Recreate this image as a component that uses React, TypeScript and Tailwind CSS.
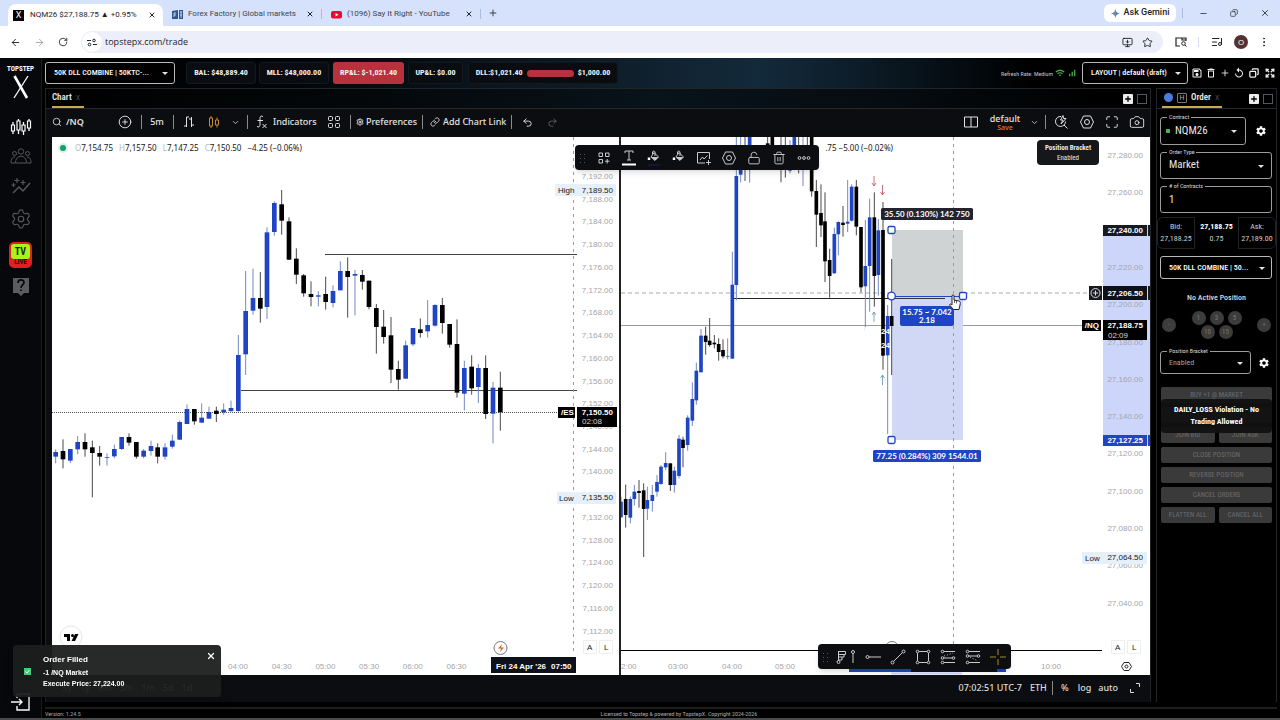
import type { ReactNode } from "react";
import {
  ArrowLeft,
  ArrowRight,
  Camera,
  ChevronDown,
  CirclePlus,
  Copy,
  EllipsisVertical,
  Expand,
  Link,
  ListMusic,
  LockOpen,
  Maximize,
  Minus,
  MonitorDown,
  Plus,
  Redo2,
  RotateCw,
  Search,
  Settings,
  Star,
  Trash2,
  Undo2,
  X,
} from "lucide-react";
import { MdSettings, MdOutlineSave, MdOutlineDelete, MdReplay, MdWifi, MdSignalCellularAlt } from "react-icons/md";

type Candle = [x: number, top: number, bottom: number, high: number, low: number, up: number];

const BLUE = "#1f45c4";

// x, body top, body bottom, wick top, wick bottom, up (third-of-a-pixel units)
const esCandles: Candle[] = [
  [167, 846, 860, 838, 880, 1], [189, 843, 868, 808, 895, 0], [211, 837, 872, 837, 879, 1],
  [233, 816, 838, 798, 853, 1], [255, 816, 838, 790, 860, 0], [277, 832, 849, 812, 982, 0],
  [299, 849, 860, 828, 887, 0], [321, 861, 863, 850, 887, 1], [343, 837, 859, 824, 865, 1],
  [365, 801, 837, 801, 840, 1], [387, 801, 818, 790, 827, 0], [409, 816, 860, 816, 866, 0],
  [431, 842, 860, 837, 865, 1], [453, 828, 843, 812, 857, 1], [473, 832, 860, 820, 880, 0],
  [495, 832, 860, 820, 869, 1], [517, 812, 830, 794, 836, 1], [539, 756, 809, 752, 810, 1],
  [561, 717, 762, 703, 762, 1], [583, 717, 754, 717, 764, 0], [605, 743, 758, 700, 758, 1],
  [627, 726, 746, 710, 746, 1], [649, 722, 732, 710, 756, 0], [671, 719, 727, 700, 734, 1],
  [693, 714, 723, 692, 726, 1], [715, 555, 723, 495, 725, 1], [737, 423, 553, 303, 615, 1],
  [759, 384, 422, 296, 434, 1], [781, 384, 416, 306, 458, 0], [801, 187, 411, 172, 447, 1],
  [823, 99, 186, 94, 197, 1], [845, 103, 152, 60, 194, 0], [867, 154, 269, 142, 270, 0],
  [889, 266, 314, 235, 342, 0], [911, 316, 370, 312, 380, 0], [933, 372, 381, 334, 409, 0],
  [955, 376, 380, 364, 409, 1], [977, 372, 396, 320, 419, 0], [999, 363, 399, 346, 412, 1],
  [1021, 303, 361, 274, 361, 1], [1043, 303, 321, 262, 443, 0], [1065, 312, 317, 300, 436, 1],
  [1087, 315, 335, 300, 359, 0], [1107, 332, 411, 332, 418, 0], [1129, 414, 471, 402, 551, 0],
  [1151, 470, 501, 420, 521, 0], [1173, 496, 599, 441, 639, 0], [1195, 597, 629, 572, 659, 0],
  [1217, 526, 626, 512, 627, 1], [1239, 474, 523, 474, 529, 1], [1261, 478, 489, 445, 503, 0],
  [1283, 465, 484, 390, 503, 1], [1305, 405, 467, 403, 470, 1], [1327, 405, 459, 384, 491, 0],
  [1349, 462, 524, 462, 533, 0], [1371, 522, 668, 448, 683, 0], [1393, 594, 671, 572, 721, 1],
  [1415, 590, 655, 556, 674, 0], [1435, 594, 651, 582, 699, 1], [1457, 594, 732, 556, 747, 0],
  [1479, 653, 731, 636, 820, 1], [1501, 653, 727, 605, 782, 0],
];

const nqCandles: Candle[] = [
  [33, 1115, 1162, 1100, 1162, 1], [47, 1107, 1155, 1064, 1193, 0], [61, 1107, 1163, 1100, 1180, 1],
  [73, 1085, 1107, 1065, 1127, 1], [87, 1083, 1089, 1050, 1133, 0], [101, 1081, 1137, 1060, 1281, 0],
  [112, 1110, 1136, 1070, 1170, 1], [127, 1095, 1113, 1065, 1145, 1], [141, 1056, 1085, 1035, 1100, 1],
  [153, 1010, 1062, 1005, 1064, 1], [167, 999, 1012, 967, 1020, 1], [181, 1000, 1065, 1000, 1083, 0],
  [193, 1022, 1065, 1010, 1088, 1], [207, 926, 1038, 915, 1045, 1], [219, 929, 954, 920, 1012, 0],
  [233, 863, 945, 856, 962, 1], [247, 807, 872, 757, 888, 1], [259, 722, 811, 698, 824, 1],
  [273, 617, 727, 597, 727, 1], [287, 617, 636, 590, 674, 0], [299, 632, 645, 564, 650, 0],
  [313, 638, 643, 615, 655, 0], [326, 642, 666, 625, 692, 0], [339, 660, 679, 628, 685, 0],
  [353, 678, 680, 625, 688, 1], [367, 464, 686, 365, 686, 1], [379, 138, 465, 0, 511, 1],
  [392, 60, 134, 0, 157, 1], [405, 50, 60, 0, 153, 0], [419, 0, 60, 0, 158, 1],
  [473, 40, 50, 0, 60, 0], [487, 0, 60, 0, 60, 0], [513, 50, 60, 0, 157, 0],
  [526, 50, 60, 0, 143, 0], [540, 60, 122, 30, 130, 1], [553, 0, 60, 0, 60, 1],
  [566, 50, 60, 0, 130, 0], [579, 50, 60, 0, 168, 1], [592, 50, 60, 0, 60, 0],
  [605, 0, 184, 0, 200, 0], [619, 183, 254, 150, 351, 0], [633, 249, 286, 163, 321, 0],
  [645, 274, 394, 187, 456, 0], [659, 390, 438, 356, 503, 0], [673, 312, 430, 293, 431, 1],
  [685, 276, 313, 274, 376, 1], [699, 278, 285, 228, 320, 0], [713, 275, 281, 150, 306, 1],
  [725, 170, 272, 163, 275, 1], [739, 170, 290, 150, 316, 0], [753, 291, 472, 291, 487, 0],
  [766, 408, 469, 270, 600, 1], [779, 262, 408, 206, 545, 1], [793, 262, 438, 187, 530, 0],
  [805, 301, 435, 267, 497, 1], [819, 300, 677, 216, 719, 0], [833, 558, 676, 525, 912, 1],
  [845, 558, 588, 387, 735, 0],
];

function Candles({ data, width, transform }: { data: Candle[]; width: number; transform: string }) {
  return (
    <g transform={transform}>
      {data.map(([x, top, bottom, high, low, up]) => (
        <g key={x}>
          <rect x={x - 1.5} y={high} width={3} height={low - high} fill={up ? "#7389c4" : "#4a4a4a"} />
          <rect x={x - width / 2} y={top} width={width} height={bottom - top} fill={up ? BLUE : "#000"} />
        </g>
      ))}
    </g>
  );
}

const axisFont = "font-['Liberation_Sans',Arial,sans-serif] text-[8px]";

function EsChart() {
  const ticks = Array.from({ length: 21 }, (_, i) => 7192 - i * 4);
  const times = ["04:00", "04:30", "05:00", "05:30", "06:00", "06:30"];
  return (
    <svg viewBox="0 0 567 538" className={`block w-full bg-white ${axisFont}`}>
      {ticks.map((t, i) => (
        <text key={t} x="561" y={42 + i * 22.73} textAnchor="end" fill="#a3a5aa">
          {`${t.toLocaleString("en-US")}.00`}
        </text>
      ))}
      {times.map((t, i) => (
        <text key={t} x={186 + i * 43.7} y="532" textAnchor="middle" fill="#a3a5aa">{t}</text>
      ))}
      <path d="M273 117.500h252M189 253.500h336" stroke="#444" />
      <path d="M0 275.500h506" stroke="#555" strokeDasharray="1 1" />
      <Candles data={esCandles} width={14} transform="translate(-52 33) scale(0.33333)" />
      <path d="M521.500 0v518" stroke="#9a9aa2" strokeDasharray="3 4" />
      <rect x="503" y="47" width="61" height="12" fill="#e6f0fb" />
      <text x="506" y="56" fill="#131722">High</text>
      <text x="561" y="56" textAnchor="end" fill="#131722">7,189.50</text>
      <rect x="505" y="355" width="59" height="12" fill="#e6f0fb" />
      <text x="507" y="364" fill="#131722">Low</text>
      <text x="561" y="363" textAnchor="end" fill="#131722">7,135.50</text>
      <rect x="506" y="270" width="17" height="11" fill="#000" />
      <rect x="525" y="270" width="40" height="20" fill="#000" />
      <g fill="#fff" className="font-bold">
        <text x="509" y="278">/ES</text>
        <text x="561" y="278" textAnchor="end">7,150.50</text>
      </g>
      <text x="530" y="287" fill="#d5d5d5">02:08</text>
      <circle cx="448.500" cy="511" r="6.500" fill="#fff" stroke="#777" />
      <path d="M450 507l-4 4.500h3l-1 3.500 4-4.500h-3z" fill="#e2622c" />
      <rect x="439" y="520" width="85" height="16" fill="#0f111a" />
      <text x="444" y="532" fill="#fff" className="font-bold">Fri 24 Apr '26</text>
      <text x="499" y="532" fill="#fff" className="font-bold">07:50</text>
      <path d="M531.500 503.500h13v13h-13zM547.500 503.500h13v13h-13z" fill="none" stroke="#eee" />
      <text x="535" y="513" fill="#222">A</text>
      <text x="552" y="513" fill="#222">L</text>
      <circle cx="19" cy="500" r="11" fill="#fff" stroke="#e6e6e6" />
      <path d="M12 497h6v7h-3v-4h-3zM23 497h3.500l-3.500 7h-3.500zM19 498.500a1.500 1.500 0 1 0 3 0a1.500 1.500 0 1 0-3 0" fill="#000" />
    </svg>
  );
}

function NqChart() {
  const ticks = Array.from({ length: 13 }, (_, i) => 27280 - i * 20).filter((t) => t !== 27240);
  return (
    <svg viewBox="0 0 529 538" className={`block w-full bg-white ${axisFont}`}>
      <rect x="482" y="88" width="47" height="220" fill="#ccd6fb" />
      {ticks.map((t) => (
        <text key={t} x="522" y={21 + (27280 - t) * 1.865} textAnchor="end" fill="#a3a5aa">
          {`${t.toLocaleString("en-US")}.00`}
        </text>
      ))}
      <text x="0" y="532" fill="#a3a5aa">2:00</text>
      {[["03:00", 57], ["04:00", 111], ["05:00", 164], ["10:00", 430]].map(([t, x]) => (
        <text key={t} x={x} y="532" textAnchor="middle" fill="#a3a5aa">{t}</text>
      ))}
      <path d="M0 156h467" stroke="#a9a9ae" strokeDasharray="4 3" />
      <path d="M0 188.500h461" stroke="#9a9a9a" />
      <path d="M113 161.500h211" stroke="#222" />
      <rect x="271" y="93" width="71" height="67" fill="#d0d3d3" />
      <rect x="271" y="160" width="71" height="143" fill="#d0d8f5" />
      <Candles data={nqCandles} width={11} transform="translate(-11 -7) scale(0.33333)" />
      <g className="font-bold" fill="#fff">
        <text x="260" y="197">24</text>
        <text x="260" y="211">24</text>
      </g>
      <path d="M244.500 190v20" stroke="#fff" strokeDasharray="3 4" />
      <g strokeWidth=".8" fill="none">
        <path d="M253 39v10m-2-3l2 3 2-3M261.500 48v10m-2-3l2 3 2-3" stroke="#c8485a" />
        <path d="M253 185v-10m-2 3l2-3 2 3M261.500 248v-10m-2 3l2-3 2 3" stroke="#5f93ac" />
      </g>
      <path d="M332.500 0v513" stroke="#9a9aa2" strokeDasharray="3 4" />
      <path d="M271 159.500h71" stroke={BLUE} />
      <path d="M271 161.500h53" stroke="#333" />
      <g fill="#fff" stroke={BLUE} strokeWidth="1.300">
        <rect x="267" y="89.500" width="7" height="7" rx="1.500" />
        <rect x="267" y="299.500" width="7" height="7" rx="1.500" />
        <rect x="338.500" y="155.500" width="7" height="7" rx="1.500" />
        <circle cx="270.500" cy="159" r="3.800" />
      </g>
      <rect x="260" y="71" width="92" height="12" rx="1.500" fill="#24242f" />
      <rect x="252" y="313" width="108" height="12" rx="1.500" fill={BLUE} />
      <rect x="279" y="169" width="54" height="20" rx="2" fill={BLUE} />
      <g className="font-['Lato',sans-serif] font-bold" fill="#fff" textAnchor="middle">
        <text x="306" y="80">35.50 (0.130%) 142 750</text>
        <text x="306" y="322">77.25 (0.284%) 309 1544.01</text>
        <text x="306" y="178">15.75 ~ 7.042</text>
        <text x="306" y="186">2.18</text>
      </g>
      {/* pointer hand */}
      <path d="M331 159c0-1.500 2-1.500 2 0v4l5 1c1.500.5 1.500 2 1 4l-1 4.500h-5.500l-3.500-4c-1-1.500.5-2 2-.5z" fill="#fff" stroke="#222" />
      <path d="M333.500 163v3M335.500 163.500v3" stroke="#222" strokeWidth=".7" />
      <rect x="482" y="88" width="44" height="11" fill="#171923" />
      <rect x="482" y="149" width="44" height="14" fill="#0f111a" />
      <rect x="468" y="149" width="13" height="14" fill="#171923" />
      <circle cx="474.500" cy="156" r="4.500" fill="none" stroke="#ddd" />
      <path d="M472 156h5m-2.500-2.500v5" stroke="#ddd" />
      <rect x="461" y="183" width="19" height="11" fill="#000" />
      <rect x="482" y="183" width="44" height="20" fill="#000" />
      <rect x="482" y="298" width="44" height="11" fill={BLUE} />
      <path d="M528 88v11M528 149v14" stroke="#171923" strokeWidth="2" />
      <path d="M528 298v11" stroke={BLUE} strokeWidth="2" />
      <g fill="#fff" className="font-bold" textAnchor="end">
        <text x="522" y="96">27,240.00</text>
        <text x="522" y="159">27,206.50</text>
        <text x="522" y="191">27,188.75</text>
        <text x="522" y="306">27,127.25</text>
        <text x="478" y="191">/NQ</text>
      </g>
      <text x="487" y="201" fill="#d5d5d5">02:09</text>
      <rect x="461" y="415" width="65" height="12" fill="#e6f0fb" />
      <text x="464" y="424" fill="#131722">Low</text>
      <text x="522" y="423" textAnchor="end" fill="#131722">27,064.50</text>
      <path d="M0 513.500h481" stroke="#000" />
      <circle cx="271" cy="511" r="6.500" fill="#fff" stroke="#777" />
      <path d="M228 531.500h62" stroke={BLUE} strokeWidth="7" />
      <path d="M290 531.500h86" stroke="#0f111a" strokeWidth="7" />
      <path d="M376 531.500h9" stroke={BLUE} strokeWidth="7" />
      <path d="M270 536.500h71" stroke="#ccd6fb" strokeWidth="2" />
      <path d="M490.500 503.500h13v13h-13zM506.500 503.500h13v13h-13z" fill="none" stroke="#eee" />
      <text x="494" y="513" fill="#222">A</text>
      <text x="511" y="513" fill="#222">L</text>
      <path d="M500.500 529.500l2.500-4h5l2.500 4-2.500 4h-5z" fill="none" stroke="#222" />
      <circle cx="505.500" cy="529.500" r="1.500" fill="none" stroke="#222" />
    </svg>
  );
}

function Svg({ children, w = 16, h = 16, className = "" }: { children: ReactNode; w?: number; h?: number; className?: string }) {
  return (
    <svg width={w} height={h} viewBox={`0 0 ${w} ${h}`} fill="none" stroke="currentColor" className={`shrink-0 ${className}`}>
      {children}
    </svg>
  );
}

function Hexagon() {
  return (
    <Svg>
      <path d="M1.500 8L4.500 2h7l3 6-3 6h-7z" />
      <circle cx="8" cy="8" r="2.500" />
    </Svg>
  );
}

function Grip() {
  return (
    <Svg w={8} h={12}>
      <path d="M1.500 2v1M5.500 2v1M1.500 6v1M5.500 6v1M1.500 10v1M5.500 10v1" stroke="#555" />
    </Svg>
  );
}

function IconButton({ label, className = "", children }: { label: string; className?: string; children: ReactNode }) {
  return (
    <button type="button" aria-label={label} className={`flex shrink-0 items-center justify-center ${className}`}>
      {children}
    </button>
  );
}

function Sep({ className = "w-3" }: { className?: string }) {
  return (
    <span className={`flex shrink-0 justify-center ${className}`}>
      <span className="h-[14px] w-px bg-[#8b8b8d]" />
    </span>
  );
}

const browserTabs = [
  { title: "Forex Factory | Global markets", icon: "ff" },
  { title: "(1096) Say It Right - YouTube", icon: "yt" },
];

function BrowserChrome() {
  return (
    <header className="bg-[#d6e2fb] font-['Open_Sans',sans-serif] text-[#1f2328]">
      <div className="flex h-[26px] items-center pl-2 font-['Roboto',sans-serif]">
        <div className="mt-1 flex h-[22px] w-[155px] shrink-0 items-center rounded-t-lg bg-white pr-[7px] pl-[5px]">
          <span className="flex h-[11px] w-[11px] shrink-0 items-center justify-center bg-black text-[9px] leading-none text-white">X</span>
          <span className="ml-[6px] flex-1 text-[8px] whitespace-nowrap">NQM26 $27,188.75 ▲ +0.95%</span>
          <button type="button" aria-label="Close tab"><X size={8} strokeWidth={3} /></button>
        </div>
        {browserTabs.map((tab) => (
          <div key={tab.icon} className="flex h-[26px] w-[159px] shrink-0 items-center pt-[2px] pl-[9px] text-[8px] text-[#40454c]">
            {tab.icon === "ff" ? (
              <Svg w={11} h={9}>
                <path d="M0 1l6-1v9H0zM7 0h4v9H7z" fill="#2f568f" stroke="none" />
                <path d="M2 7V3h2M2 5h2M8 2h2M8 5h2M9 1v7" stroke="#dfe8f8" strokeWidth=".8" />
              </Svg>
            ) : (
              <Svg w={11} h={9}>
                <rect y="1" width="11" height="7.500" rx="2" fill="#f00633" stroke="none" />
                <path d="M4.500 3v3.500L7.500 4.800z" fill="#fff" stroke="none" />
              </Svg>
            )}
            <span className="ml-[5px] flex-1 overflow-hidden whitespace-nowrap">{tab.title}</span>
            <button type="button" aria-label="Close tab" className="mr-[7px] ml-1 text-[#1f2328]"><X size={8} strokeWidth={3} /></button>
            <span className="h-[10px] w-px bg-[#a9bce0]" />
          </div>
        ))}
        <button type="button" aria-label="New tab" className="ml-[7px]"><Plus size={10} /></button>
        <div className="ml-auto flex items-center">
          <button type="button" className="flex h-[18px] w-[72px] items-center justify-center gap-1 rounded-md bg-white text-[9px] font-medium whitespace-nowrap">
            <Svg w={9} h={9}>
              <path d="M4.500 0C5 3 6 4 9 4.500 6 5 5 6 4.500 9 4 6 3 5 0 4.500 3 4 4 3 4.500 0z" fill="#3f7de8" stroke="none" />
              <path d="M0 4.500C3 4 4 3 4.500 0v4.500z" fill="#e2705a" stroke="none" />
              <path d="M0 4.500C3 5 4 6 4.500 9V4.500z" fill="#4caf6a" stroke="none" />
            </Svg>
            Ask Gemini
          </button>
          <span className="ml-[6px] h-[10px] w-px bg-[#a9bce0]" />
          <IconButton label="Minimize" className="w-10"><Minus size={9} /></IconButton>
          <IconButton label="Restore" className="w-[22px]"><Copy size={8} className="-scale-x-100" /></IconButton>
          <IconButton label="Close" className="mr-[10px] ml-[14px] w-[11px]"><X size={10} /></IconButton>
        </div>
      </div>
      <div className="flex h-8 items-center bg-white pr-[10px] pl-[9px]">
        <IconButton label="Back" className="w-3"><ArrowLeft size={11} /></IconButton>
        <IconButton label="Forward" className="ml-3 w-3 text-[#9aa0a6]"><ArrowRight size={11} /></IconButton>
        <IconButton label="Reload" className="ml-3 w-3"><RotateCw size={10} /></IconButton>
        <div className="ml-[12px] flex h-[22px] flex-1 items-center rounded-full bg-[#eceff9] pr-[8px] pl-[1px]">
          <span className="flex h-5 w-5 items-center justify-center rounded-full bg-white">
            <Svg w={10} h={9}>
              <path d="M0 2.500h4M6 6.500h4" strokeWidth="1.200" />
              <circle cx="7" cy="2.500" r="1.300" />
              <circle cx="2.500" cy="6.500" r="1.300" />
            </Svg>
          </span>
          <input aria-label="Address" defaultValue="topstepx.com/trade" className="ml-[3px] min-w-0 flex-1 bg-transparent text-[9px] outline-none" />
          <IconButton label="Install" className="w-4"><MonitorDown size={11} /></IconButton>
          <IconButton label="Bookmark" className="ml-[4px] w-4"><Star size={11} /></IconButton>
        </div>
        <IconButton label="Lens" className="ml-[11px] w-[14px]">
          <Svg w={12} h={10}>
            <path d="M5 9H1V1h10v3M7 1v2h4" strokeWidth="1.200" />
            <circle cx="8.500" cy="6.500" r="1.800" />
            <path d="M10 8l1.500 1.500" />
          </Svg>
        </IconButton>
        <span className="ml-[10px] h-[10px] w-px bg-[#d3dcf0]" />
        <IconButton label="Media" className="ml-[11px] w-[14px]"><ListMusic size={12} /></IconButton>
        <IconButton label="Profile" className="ml-[10px] h-[14px] w-[14px] rounded-full bg-[#54312f] text-[8px] text-white">O</IconButton>
        <IconButton label="Menu" className="ml-[10px] w-3"><EllipsisVertical size={12} /></IconButton>
      </div>
    </header>
  );
}

function Sidebar() {
  return (
    <nav className="flex w-[42px] shrink-0 flex-col items-center border-r border-[#1b1c1f] bg-[#07080b] text-[#55575b]">
      <div className="mt-[6px] text-[7px] leading-[10px] font-bold text-white">TOPSTEP</div>
      <Svg w={18} h={24} className="mt-[1px] text-white">
        <path d="M2.500 1L15 23" strokeWidth="2.600" />
        <path d="M16 1L2 23" strokeWidth="1.300" />
      </Svg>
      <IconButton label="Trade" className="mt-[17px] h-[22px] w-6 text-white">
        <Svg w={22} h={20}>
          <path d="M3 5v3M3 14v3M8.500 2v2M8.500 13v4M13.500 5v3M13.500 14v4M19 2v2M19 11v3" strokeWidth="1.300" />
          <path d="M1.500 8h3v6h-3zM7 4h3v9H7zM12 8h3v6h-3zM17.500 4h3v7h-3z" strokeWidth="1.200" />
        </Svg>
      </IconButton>
      <IconButton label="Community" className="mt-[9px] h-[18px] w-6">
        <Svg w={22} h={16}>
          <circle cx="11" cy="3.500" r="2.700" />
          <circle cx="4.500" cy="5.500" r="2" />
          <circle cx="17.500" cy="5.500" r="2" />
          <path d="M5.500 15c0-9 11-9 11 0zM5 15H1c0-4 1-6 4-6M17 15h4c0-4-1-6-4-6" />
        </Svg>
      </IconButton>
      <IconButton label="Insights" className="mt-[12px] h-[18px] w-6">
        <Svg w={20} h={16}>
          <path d="M2 15l6-6 4 4 7-8" strokeWidth="1.500" />
          <path d="M6 0v5M3.500 2.500h5M2.500 5v4M.5 7h4M12 2v5M9.500 4.500h5" strokeWidth="1.200" />
        </Svg>
      </IconButton>
      <IconButton label="Settings" className="mt-[13px] h-[22px] w-6"><Settings size={22} strokeWidth={1.3} /></IconButton>
      <button type="button" className="mt-[12px] flex flex-col items-center rounded-[5px] border-[2px] border-[#e02020] bg-[#e02020] leading-none">
        <span className="flex h-[15px] w-[19px] items-center justify-center rounded-[3px] bg-[#a4f51c] text-[10px] font-bold text-[#1c2b10]">TV</span>
        <span className="h-[7px] text-[7px] font-bold text-[#2a0505]">LIVE</span>
      </button>
      <IconButton label="Help" className="mt-[8px] h-5 w-5">
        <Svg w={16} h={19}>
          <path d="M0 1h16v15h-5l-3 3-3-3H0z" fill="#5a5c60" stroke="none" />
          <path d="M5 6c0-4 6-4 6-.5C11 8 8 8 8 11M8 12.500v1.500" stroke="#07080b" strokeWidth="1.700" />
        </Svg>
      </IconButton>
      <IconButton label="Log out" className="mt-auto mb-[6px] h-5 w-5 text-white">
        <Svg w={20} h={20}>
          <path d="M6 6V2h12v16H6v-4M0 10h11M8 7l3 3-3 3" strokeWidth="1.400" />
        </Svg>
      </IconButton>
    </nav>
  );
}

function Caret({ className = "right-[7px]" }: { className?: string }) {
  return (
    <svg width="6" height="3" viewBox="0 0 6 3" className={`pointer-events-none absolute top-1/2 -mt-px ${className}`}>
      <path d="M0 0h6L3 3z" fill="#e4e4e4" />
    </svg>
  );
}

function Dropdown({ label, value, className = "" }: { label: string; value: string; className?: string }) {
  return (
    <div className={`relative shrink-0 ${className}`}>
      <select
        aria-label={label}
        className="block h-full w-full appearance-none truncate rounded-[3px] border border-[#b9b9b9] bg-black pr-[14px] pl-2 text-[8px] font-medium text-white"
      >
        <option>{value}</option>
      </select>
      <Caret />
    </div>
  );
}

function TopBar() {
  const chip = "flex h-[22px] shrink-0 items-center justify-center rounded-[3px] border border-[#14191e] bg-[#090c10]";
  return (
    <div className="flex h-[30px] items-center bg-[linear-gradient(90deg,#000_0%,#02060a_20%,#0d1a24_42%,#132a3b_58%,#0c1c28_66%,#000_80%)] text-[8px] font-bold whitespace-nowrap text-[#f2f2f2]">
      <Dropdown label="Account" value="50K DLL COMBINE | 50KTC-..." className="h-[22px] w-[130px]" />
      <div className={`ml-[11px] w-[70px] ${chip}`}>BAL: $48,889.40</div>
      <div className={`ml-[3px] w-[70px] ${chip}`}>MLL: $48,000.00</div>
      <div className="ml-[4px] flex h-[22px] w-[71px] shrink-0 items-center justify-center rounded-[3px] bg-[#b8323e]">RP&amp;L: $-1,021.40</div>
      <div className={`ml-[4px] w-[55px] ${chip}`}>UP&amp;L: $0.00</div>
      <div className={`ml-[5px] w-[150px] gap-1 ${chip}`}>
        DLL:$1,021.40
        <span className="h-[7px] w-[47px] rounded-full bg-[#b8323e]" />
        $1,000.00
      </div>
      <div className="ml-auto flex items-center">
        <span className="text-[6px] font-normal text-[#c5c5c5]">Refresh Rate: Medium</span>
        <MdWifi size={10} className="ml-[2px] text-[#4caf50]" />
        <MdSignalCellularAlt size={10} className="ml-[2px] text-[#4caf50]" />
        <Dropdown label="Layout" value="LAYOUT | default (draft)" className="ml-[5px] h-[22px] w-[106px]" />
        <IconButton label="Save" className="ml-[2px] w-[14px]"><MdOutlineSave size={12} /></IconButton>
        <IconButton label="Delete" className="w-[14px]"><MdOutlineDelete size={12} /></IconButton>
        <IconButton label="Add" className="w-[14px]"><Plus size={10} /></IconButton>
        <IconButton label="Reset" className="w-[14px]"><MdReplay size={12} /></IconButton>
        <IconButton label="Windows" className="w-[16px]"><Copy size={10} strokeWidth={3} className="-scale-x-100" /></IconButton>
        <IconButton label="Fullscreen" className="w-[15px]"><Expand size={10} strokeWidth={3} /></IconButton>
      </div>
    </div>
  );
}

function PanelButtons() {
  return (
    <div className="ml-auto flex gap-[4px]">
      <button type="button" aria-label="Add tab" className="flex h-[10px] w-[10px] items-center justify-center rounded-[1px] bg-[#ececec] text-black"><Plus size={8} strokeWidth={4} /></button>
      <button type="button" aria-label="Maximize" className="h-[10px] w-[10px] border border-[#55595c]" />
    </div>
  );
}

function ChartToolbar() {
  return (
    <div className="flex h-[28px] items-center bg-[#0c0d10] pb-[2px] font-['Noto_Sans',sans-serif] text-[9px] font-medium whitespace-nowrap text-[#e2e2e2]">
      <button type="button" className="flex w-[63px] items-center gap-1 font-semibold"><Search size={10} />/NQ</button>
      <IconButton label="Compare" className="w-5"><CirclePlus size={14} strokeWidth={1.6} /></IconButton>
      <Sep />
      <button type="button" className="w-5">5m</button>
      <Sep />
      <IconButton label="Bars" className="w-5">
        <Svg w={12} h={12}><path d="M1 10h2.500V1H6M3.500 10v1M6 3h2.500v8M8.500 1v10M8.500 9H11" /></Svg>
      </IconButton>
      <IconButton label="Candles" className="w-[30px] text-[#c98a2e]">
        <Svg w={12} h={14}><path d="M1.500 3h3v8h-3zM3 1v2M3 11v2M7.500 5h3v5h-3zM9 2.500V5M9 10v2.500" /></Svg>
      </IconButton>
      <IconButton label="Chart styles" className="w-3"><ChevronDown size={9} /></IconButton>
      <Sep />
      <IconButton label="Functions" className="w-[18px]">
        <Svg w={12} h={14}><path d="M7 1.500c-2-1-3 0-3 2v6c0 2-1 3-3 2M1.500 5.500H7M6.500 9l4 4m0-4l-4 4" /></Svg>
      </IconButton>
      <button type="button" className="w-[51px] pl-[2px] text-left">Indicators</button>
      <IconButton label="Templates" className="w-6">
        <Svg w={12} h={12}><path d="M.5 1.500a1 1 0 0 1 1-1h2a1 1 0 0 1 1 1v2a1 1 0 0 1-1 1h-2a1 1 0 0 1-1-1zM7.500 1.500a1 1 0 0 1 1-1h2a1 1 0 0 1 1 1v2a1 1 0 0 1-1 1h-2a1 1 0 0 1-1-1zM.5 8.500a1 1 0 0 1 1-1h2a1 1 0 0 1 1 1v2a1 1 0 0 1-1 1h-2a1 1 0 0 1-1-1zM7.500 8.500a1 1 0 0 1 1-1h2a1 1 0 0 1 1 1v2a1 1 0 0 1-1 1h-2a1 1 0 0 1-1-1z" /></Svg>
      </IconButton>
      <Sep className="w-2" />
      <button type="button" className="flex w-[64px] items-center gap-[2px] pl-[2px]"><Settings size={8} strokeWidth={3} />Preferences</button>
      <Sep className="w-2" />
      <button type="button" className="flex w-[81px] items-center gap-[3px] pl-[4px]"><Link size={10} />Add Chart Link</button>
      <Sep className="w-2" />
      <IconButton label="Undo" className="w-6"><Undo2 size={11} /></IconButton>
      <IconButton label="Redo" className="w-[26px] text-[#5c5e62]"><Redo2 size={11} /></IconButton>
      <div className="ml-auto flex items-center">
        <IconButton label="Split" className="w-[26px]"><Svg w={14} h={12}><path d="M.5 1h13v10H.5zM7 1v10" /></Svg></IconButton>
        <button type="button" className="w-[42px] text-[9px] leading-[10px]">
          default
          <span className="block text-[7px] leading-[7px] text-[#e07b1a]">Save</span>
        </button>
        <IconButton label="Layouts" className="w-4"><ChevronDown size={9} /></IconButton>
        <Sep className="w-[6px]" />
        <IconButton label="Quick search" className="w-[26px]">
          <Svg w={14} h={14}><path d="M7 1.500a5 5 0 1 0 4.500 5M10 10l3.500 3.500M9 .5L6.500 5H9L7 9l5-5.500H9.500z" /></Svg>
        </IconButton>
        <IconButton label="Chart settings" className="w-[25px]"><Hexagon /></IconButton>
        <IconButton label="Full screen" className="w-[25px]"><Maximize size={14} strokeWidth={1.6} /></IconButton>
        <IconButton label="Snapshot" className="w-[26px]"><Camera size={16} strokeWidth={1.4} /></IconButton>
      </div>
    </div>
  );
}

function DrawingProperties() {
  const item = "h-full w-[25px]";
  return (
    <div className="absolute top-[8px] left-[523px] flex h-[25px] w-[244px] items-center rounded bg-[#0d0e11] pl-[4px] text-[#c9cacc] shadow-md">
      <span className="w-[12px]"><Grip /></span>
      <IconButton label="Templates" className={item}>
        <Svg w={12} h={12}><path d="M1 1h3.500v3.500H1zM7.500 1H11v3.500H7.500zM1 7.500h3.500V11H1zM9.200 7v4.500M7 9.200h4.500" /></Svg>
      </IconButton>
      <IconButton label="Text colour" className={item}>
        <Svg w={14} h={16}><path d="M3 3V1h8v2M7 1v9M5 10h4" /><path d="M0 14.500h14" stroke="#fff" strokeWidth="2" /></Svg>
      </IconButton>
      {["#1a1d5c", "#0d0e11"].map((c) => (
        <IconButton key={c} label="Fill colour" className={item}>
          <Svg w={14} h={16}>
            <path d="M7 2.500l4.500 4.500L8 10.500 4 7zM8 6V2a1.300 1.300 0 0 0-2.500 0v2" />
            <path d="M5 7.500h5.500L8 10z" fill="currentColor" />
            <path d="M2 7.500v2.500" stroke="#fff" strokeWidth="2.500" />
            <path d="M1 15h12" stroke={c} />
          </Svg>
        </IconButton>
      ))}
      <IconButton label="Add alert" className={item}>
        <Svg w={16} h={14}><path d="M9 12H1.500V1.500h12V8M4 9l2.500-3L8 8l3.500-3.500M12.500 9v5M10 11.500h5" /></Svg>
      </IconButton>
      <IconButton label="Settings" className={item}><Hexagon /></IconButton>
      <IconButton label="Lock" className={item}><LockOpen size={14} strokeWidth={1.6} /></IconButton>
      <IconButton label="Remove" className={item}><Trash2 size={14} strokeWidth={1.6} /></IconButton>
      <IconButton label="More" className={item}>
        <Svg w={14} h={6}><circle cx="2.500" cy="3" r="1.400" /><circle cx="7" cy="3" r="1.400" /><circle cx="11.500" cy="3" r="1.400" /></Svg>
      </IconButton>
    </div>
  );
}

function DrawingTools() {
  const item = "h-full w-[25px]";
  return (
    <div className="absolute bottom-[6px] left-[766px] flex h-[25px] w-[193px] items-center rounded bg-[#0d0e11] pl-[4px] text-[#c9cacc] shadow-md">
      <span className="w-[10px]"><Grip /></span>
      <IconButton label="Volume profile" className="h-full w-[28px]">
        <Svg w={20} h={16}>
          <path d="M2.500 2v10M2.500 2.500h7v3h-7M8 5.500v2.500H2.500M6 8v3H2.500M17 5v9" />
          <circle cx="2.500" cy="13" r="1.500" />
          <circle cx="17" cy="3" r="1.500" />
        </Svg>
      </IconButton>
      <IconButton label="Horizontal ray" className={item}>
        <Svg w={16} h={6}><circle cx="2.500" cy="3" r="1.500" /><path d="M4 3h12" /></Svg>
      </IconButton>
      <IconButton label="Trend line" className={item}>
        <Svg><circle cx="2.500" cy="13.500" r="1.500" /><circle cx="13.500" cy="2.500" r="1.500" /><path d="M3.500 12.500l9-9" /></Svg>
      </IconButton>
      <IconButton label="Rectangle" className={item}>
        <Svg>
          <path d="M2.500 4v8M13.500 4v8M4 2.500h8M4 13.500h8" />
          <circle cx="2.500" cy="2.500" r="1.300" /><circle cx="13.500" cy="2.500" r="1.300" />
          <circle cx="2.500" cy="13.500" r="1.300" /><circle cx="13.500" cy="13.500" r="1.300" />
        </Svg>
      </IconButton>
      <IconButton label="Long position" className={item}>
        <Svg>
          <path d="M4 2.500h11M4 9h8M4 13.500h11" />
          <path d="M4 7l9-3" strokeDasharray="1 2" />
          <circle cx="2.500" cy="2.500" r="1.300" /><circle cx="2.500" cy="9" r="1.300" /><circle cx="13.500" cy="9" r="1.300" /><circle cx="2.500" cy="13.500" r="1.300" />
        </Svg>
      </IconButton>
      <IconButton label="Short position" className={item}>
        <Svg>
          <path d="M4 2.500h11M4 7h8M4 13.500h11" />
          <path d="M5 8l8 4" strokeDasharray="1 2" />
          <circle cx="2.500" cy="2.500" r="1.300" /><circle cx="2.500" cy="7" r="1.300" /><circle cx="13.500" cy="7" r="1.300" /><circle cx="2.500" cy="13.500" r="1.300" />
        </Svg>
      </IconButton>
      <IconButton label="Crosshair" className={`text-[#a08a2c] ${item}`}>
        <Svg><path d="M8 0v6M8 10v6M0 8h6M10 8h6" /></Svg>
      </IconButton>
    </div>
  );
}

function Ohlc({ values, change }: { values: [string, string][]; change: string }) {
  return (
    <span className="flex gap-[6px] whitespace-nowrap">
      {values.map(([k, v]) => (
        <span key={k}><span className="text-[#b5b7bd]">{k}</span>{v}</span>
      ))}
      <span>{change}</span>
    </span>
  );
}

function ChartPanel() {
  return (
    <section className="flex min-w-0 flex-1 flex-col border-x border-t border-[#222528]">
      <div className="flex h-[20px] items-stretch border-b border-[#26292c] bg-[linear-gradient(90deg,#000_0%,#04080b_30%,#08131a_55%,#060d12_75%,#000_95%)] pr-[3px] pl-[6px]">
        <div className="flex w-8 items-center gap-1 border-b-2 border-[#c8a95a] text-[9px] font-semibold text-[#e8e8e8]">
          Chart
          <button type="button" aria-label="Close chart" className="text-[8px] font-normal text-[#4c4f52]">X</button>
        </div>
        <div className="ml-auto flex items-center"><PanelButtons /></div>
      </div>
      <div className="flex-1 bg-[#0c0d10] pl-[6px]">
        <ChartToolbar />
        <div className="relative grid grid-cols-[567fr_2px_529fr] bg-[#222]">
          <EsChart />
          <span />
          <NqChart />
          <div className="absolute top-[5px] left-[6px] flex items-center gap-[7px] font-['Noto_Sans',sans-serif] text-[8px] text-[#131722]">
            <span className="flex h-[10px] w-[10px] items-center justify-center rounded-full bg-[#d9f0e8]">
              <span className="h-[6px] w-[6px] rounded-full bg-[#12a06c]" />
            </span>
            <Ohlc values={[["O", "7,154.75"], ["H", "7,157.50"], ["L", "7,147.25"], ["C", "7,150.50"]]} change="−4.25 (−0.06%)" />
          </div>
          <span className="absolute top-[5px] right-[257px] font-['Noto_Sans',sans-serif] text-[8px] text-[#131722]">.75 −5.00 (−0.02%)</span>
          <div role="status" className="absolute top-[3px] right-[51px] flex h-[25px] w-[62px] flex-col items-center justify-center rounded bg-[#15171b] text-[7px] leading-[10px] text-[#e8e8e8]">
            <b>Position Bracket</b>
            Enabled
          </div>
          <DrawingProperties />
          <DrawingTools />
        </div>
        <div className="flex h-[26px] items-center font-['Noto_Sans',sans-serif] text-[9px] font-medium whitespace-nowrap text-[#dcdcdc]">
          <div className="ml-[10px] flex items-center gap-[8px]">
            {["5y", "1y", "6m", "3m", "1m", "5d", "1d"].map((r) => <button type="button" key={r}>{r}</button>)}
          </div>
          <div className="ml-auto flex items-center pr-[8px]">
            <button type="button">07:02:51 UTC-7</button>
            <button type="button" className="ml-2">ETH</button>
            <Sep />
            <button type="button" className="w-3">%</button>
            <button type="button" className="ml-[7px]">log</button>
            <button type="button" className="ml-[7px]">auto</button>
            <IconButton label="Maximize chart" className="ml-[10px] w-[14px]">
              <Svg w={10} h={10}><path d="M6 .5h3.500V4M4 9.500H.5V6" /></Svg>
            </IconButton>
          </div>
        </div>
      </div>
    </section>
  );
}

function Field({ id, label, className, children }: { id: string; label: string; className: string; children: ReactNode }) {
  return (
    <div className={`relative rounded-[3px] border border-[#9c9c9c] ${className}`}>
      <label htmlFor={id} className="absolute -top-[5px] left-[6px] bg-black px-[2px] text-[6px] leading-[8px] text-[#d8d8d8]">{label}</label>
      {children}
    </div>
  );
}

function OrderPanel() {
  const select = "block h-full w-full appearance-none bg-transparent";
  const gray = "flex items-center justify-center rounded-[2px] bg-[#3a3a3a] text-[7px] text-[#6c6c6c]";
  const round = "flex h-[14px] w-[14px] items-center justify-center rounded-full bg-[#3c3c3c] text-[7px] text-[#777]";
  return (
    <aside className="w-[121px] shrink-0 border-x border-t border-[#222528] bg-black">
      <div className="flex h-[20px] items-stretch border-b border-[#26292c] pr-[3px] pl-[5px]">
        <div className="flex w-[60px] items-center gap-[4px] border-b-2 border-[#c8a95a] pl-[2px] text-[9px] font-semibold text-[#e8e8e8]">
          <span className="h-[9px] w-[9px] rounded-full bg-[#4a7de0]" />
          <span className="flex h-[10px] w-[10px] items-center justify-center rounded-[1px] border border-[#777] text-[8px] font-normal text-[#aaa]">H</span>
          Order
          <button type="button" aria-label="Close order" className="text-[8px] font-normal text-[#4c4f52]">X</button>
        </div>
        <div className="ml-auto flex items-center"><PanelButtons /></div>
      </div>
      <div className="flex flex-col px-[3px]">
        <div className="mt-[8px] flex items-center">
          <Field id="contract" label="Contract" className="h-[28px] w-[86px]">
            <span className="absolute top-[11px] left-[5px] h-1 w-1 bg-[#4caf50]" />
            <select id="contract" className={`${select} pl-[14px] text-[11px] text-[#e6e6e6]`}><option>NQM26</option></select>
            <Caret className="right-[8px]" />
          </Field>
          <button type="button" aria-label="Contract settings" className="ml-[9px]"><MdSettings size={12} color="#fff" /></button>
        </div>
        <Field id="order-type" label="Order Type" className="mt-[7px] h-[27px] w-[112px]">
          <select id="order-type" className={`${select} pl-[8px] text-[11px] text-[#e6e6e6]`}><option>Market</option></select>
          <Caret />
        </Field>
        <Field id="contracts" label="# of Contracts" className="mt-[7px] h-[27px] w-[112px]">
          <input id="contracts" defaultValue="1" className="block h-full w-full bg-transparent pl-[8px] text-[11px] text-[#e6e6e6]" />
        </Field>
      </div>
      <div className="mt-[4px] flex h-[32px] text-center text-[8px] leading-[12px] text-[#cfcfcf]">
        <button type="button" className="w-[38px] rounded-l-md border border-[#202225] leading-[12px]">Bid:<br />27,188.25</button>
        <div className="flex-1 pt-[4px]"><b className="text-white">27,188.75</b><br />0.75</div>
        <button type="button" className="w-[38px] rounded-r-md border border-[#202225] leading-[12px]">Ask:<br />27,189.00</button>
      </div>
      <div className="flex flex-col px-[3px]">
        <Dropdown label="Order account" value="50K DLL COMBINE | 50..." className="mt-[7px] h-[23px] w-[112px]" />
        <div className="mt-[13px] text-center text-[8px] leading-[12px] font-medium text-[#dcdcdc]">No Active Position</div>
        <div className="mt-[7px] flex items-center justify-between px-[2px]">
          <button type="button" className={round}>-</button>
          <div className="flex w-[52px] flex-wrap justify-center gap-x-[4px]">
            {[1, 3, 5, 10, 15].map((n) => <button type="button" key={n} className={round}>{n}</button>)}
          </div>
          <button type="button" className={round}>+</button>
        </div>
        <div className="mt-[12px] flex items-center">
          <Field id="bracket" label="Position Bracket" className="h-[23px] w-[91px]">
            <select id="bracket" className={`${select} pl-[8px] text-[8px] text-[#a0a0a0]`}><option>Enabled</option></select>
            <Caret />
          </Field>
          <button type="button" aria-label="Bracket settings" className="ml-[7px]"><MdSettings size={12} color="#fff" /></button>
        </div>
      </div>
      <div className="relative mx-[4px] mt-[13px] flex flex-col gap-[4px]">
        <button type="button" className={`h-[16px] ${gray}`}>BUY +1 @ MARKET</button>
        <button type="button" className={`h-[16px] ${gray}`}>SELL -1 @ MARKET</button>
        <div className="flex gap-[4px]">
          <button type="button" className={`h-[16px] flex-1 ${gray}`}>JOIN BID</button>
          <button type="button" className={`h-[16px] flex-1 ${gray}`}>JOIN ASK</button>
        </div>
        <button type="button" className={`h-[16px] ${gray}`}>CLOSE POSITION</button>
        <button type="button" className={`h-[16px] ${gray}`}>REVERSE POSITION</button>
        <button type="button" className={`h-[16px] ${gray}`}>CANCEL ORDERS</button>
        <div className="flex gap-[4px]">
          <button type="button" className={`h-[16px] flex-1 ${gray}`}>FLATTEN ALL</button>
          <button type="button" className={`h-[16px] flex-1 ${gray}`}>CANCEL ALL</button>
        </div>
        <p className="absolute top-[12px] right-0 left-0 flex h-[34px] items-center justify-center rounded bg-[#111]/95 text-center text-[8px] leading-[12px] font-bold text-white">
          DAILY_LOSS Violation - No<br />Trading Allowed
        </p>
      </div>
    </aside>
  );
}

function Toast() {
  return (
    <div role="alert" className="fixed bottom-[23px] left-[13px] flex h-[52px] w-[208px] items-center rounded bg-[#1c1e1d]/95 pl-[11px] font-['Liberation_Sans',Arial,sans-serif] text-white shadow-lg">
      <span className="flex h-[7px] w-[7px] items-center justify-center bg-[#3ecf7a]">
        <Svg w={7} h={7}><path d="M1.500 3.500L3 5l2.500-3" stroke="#fff" /></Svg>
      </span>
      <div className="ml-[12px] font-bold">
        <div className="text-[8px] leading-[14px]">Order Filled</div>
        <div className="text-[7px] leading-[11px]">-1 /NQ Market</div>
        <div className="text-[7px] leading-[11px]">Execute Price: 27,224.00</div>
      </div>
      <button type="button" aria-label="Dismiss" className="absolute top-[6px] right-[5px]"><X size={10} strokeWidth={3} /></button>
    </div>
  );
}

export default function App() {
  return (
    <div className="flex min-h-screen flex-col bg-black font-['Roboto_Condensed','Liberation_Sans_Narrow',Roboto,sans-serif]">
      <BrowserChrome />
      <div className="flex flex-1 border-b-2 border-[#4a4a4a]">
        <Sidebar />
        <main className="flex min-w-0 flex-1 flex-col pr-[3px] pl-[3px]">
          <TopBar />
          <div className="flex flex-1 gap-[5px]">
            <ChartPanel />
            <OrderPanel />
          </div>
          <footer className="mt-[5px] flex h-[11px] items-center border-t-2 border-[#1d1e20] text-[6px] leading-none text-[#a8a8a8]">
            <span>Version: 1.24.5</span>
            <span className="flex-1 text-center whitespace-nowrap">Licensed to Topstep &amp; powered by TopstepX. Copyright 2024-2026</span>
          </footer>
        </main>
      </div>
      <Toast />
    </div>
  );
}
